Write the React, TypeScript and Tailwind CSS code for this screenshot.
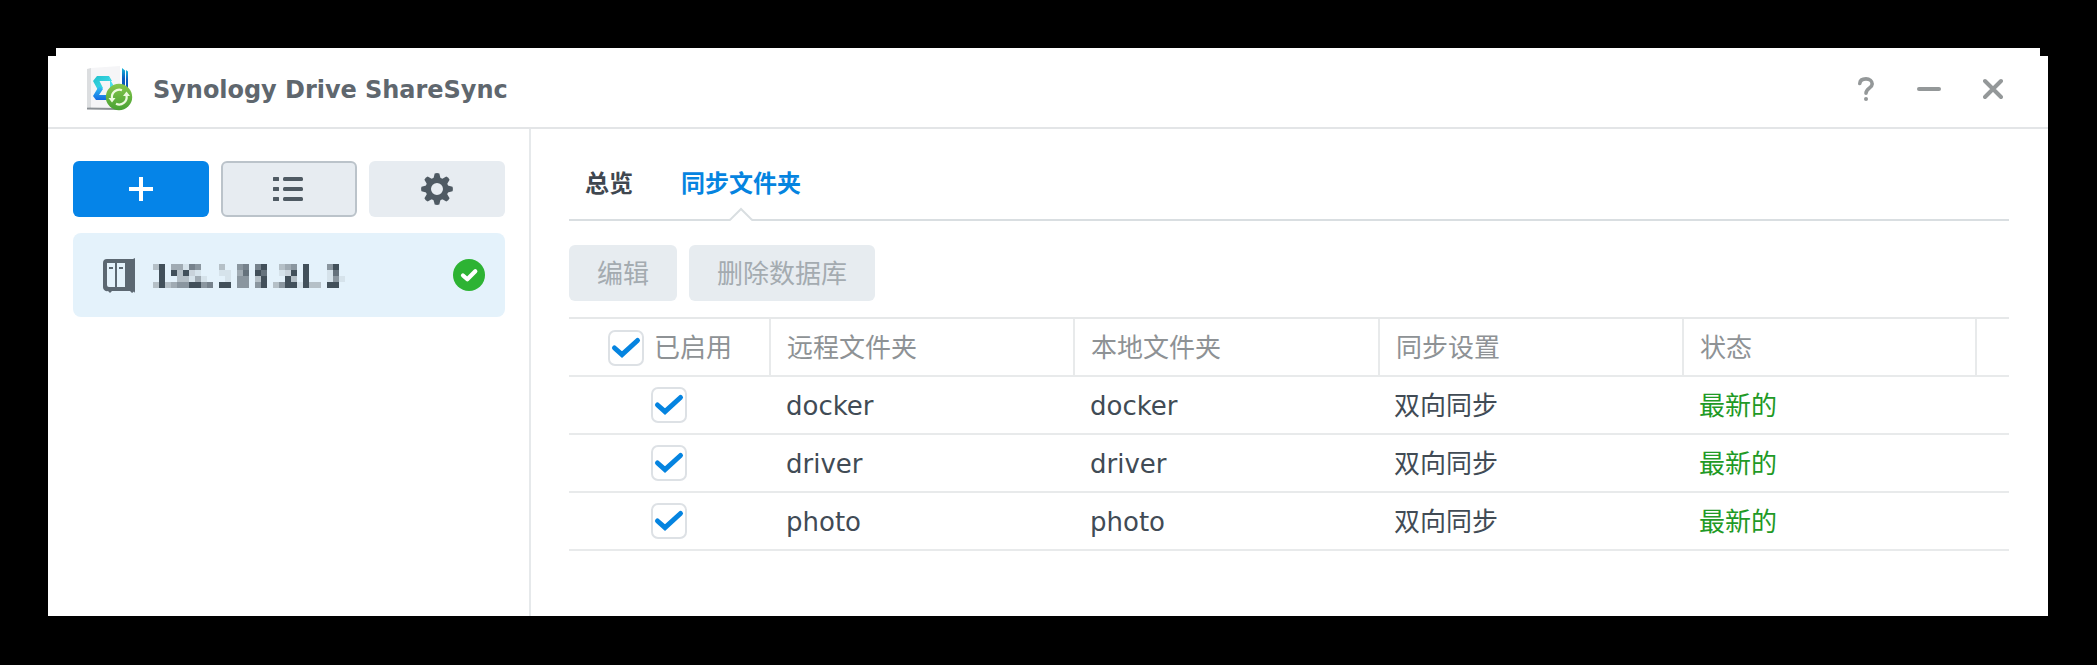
import React from "react";

const SHADES = [
  "",
  "#d6e3eb",
  "#c9d3db",
  "#b5c0c7",
  "#a0abb3",
  "#8a969f",
  "#76828c",
  "#65727c",
  "#505d67",
  "#42505a",
];

const MOSAIC = [
  "39044165000300560690034509000590",
  "09093921000110470970012909000170",
  "09003314100010550390009309000151",
  "39345599560990550590359919330990",
];

const ROWS = ["docker", "driver", "photo"];

function AppIcon() {
  return (
    <svg width="48" height="48" viewBox="0 0 48 48" className="shrink-0">
      <defs>
        <linearGradient id="teal" x1="0" y1="0" x2="1" y2="1">
          <stop offset="0" stopColor="#22c0cb" />
          <stop offset="1" stopColor="#45e3f2" />
        </linearGradient>
        <linearGradient id="blue" x1="0" y1="0" x2="0" y2="1">
          <stop offset="0" stopColor="#35c6f4" />
          <stop offset="1" stopColor="#1269e2" />
        </linearGradient>
        <linearGradient id="green" x1="0" y1="0" x2="0" y2="1">
          <stop offset="0" stopColor="#86c64c" />
          <stop offset="1" stopColor="#48a233" />
        </linearGradient>
        <linearGradient id="spine" x1="0" y1="0" x2="0" y2="1">
          <stop offset="0" stopColor="#18b8d8" />
          <stop offset="0.35" stopColor="#0a5fc0" />
          <stop offset="1" stopColor="#0b48a8" />
        </linearGradient>
      </defs>
      <path d="M2 4 L6 3 V43 L2 42Z" fill="#dcdee0" />
      <path d="M6 3 L35 1 V43 L6 42Z" fill="#f5f5f7" />
      <path d="M2 42.500 L35 43 V45 L2 44.500Z" fill="#8b9095" />
      <path d="M37 3 L40 5.500 V32 H37Z" fill="url(#spine)" />
      <path d="M41 5 L43 6.500 V32 H41Z" fill="url(#spine)" />
      <path d="M8 16 L12 11 H24 L27 16 H14.500 L18 23 L14 27Z" fill="url(#teal)" />
      <path d="M23 11 L30 23 L25 30 V16Z" fill="#4ae0ee" />
      <path d="M14 21 L18 24 L14 30 H23 V35 H11 L8 31Z" fill="url(#blue)" />
      <circle cx="34" cy="32" r="13.2" fill="url(#green)" />
      <g fill="none" stroke="#eefadf" strokeWidth="2.2">
        <path d="M27 33.500 A7.500 7.500 0 0 1 37 25.200" />
        <path d="M41.500 30.500 A7.500 7.500 0 0 1 31 38.800" />
      </g>
      <path d="M23.500 33 H30.500 L27 37.500Z M45 31 H38 L41.500 26.500Z" fill="#eefadf" />
    </svg>
  );
}

function NasIcon() {
  return (
    <svg width="34" height="36" viewBox="0 0 34 36" className="mt-[2px] shrink-0">
      <path d="M4 1 H30 L32 0 V35 L31 33.500 L29 35 L27 33 H9 L7 35 L5 33 A4 4 0 0 1 0 29 V5 A4 4 0 0 1 4 1Z" fill="#5c6872" />
      <path d="M4 5 H12 V29 H6 Q4 29 4 27Z M14 5 H22 V29 H14Z" fill="#e4f2fb" />
      <path d="M6 9 H10 V11 H6Z M16 9 H20 V11 H16Z" fill="#5c6872" />
    </svg>
  );
}

function GearIcon() {
  return (
    <svg width="32" height="32" viewBox="-16 -16 32 32" fill="#4f5a63">
      {[0, 45, 90, 135, 180, 225, 270, 315].map((angle) => (
        <path key={angle} transform={`rotate(${angle})`} d="M-4 -9 L-2.300 -15.500 Q0 -16.300 2.300 -15.500 L4 -9Z" />
      ))}
      <path fillRule="evenodd" d="M0 -11.500 A11.500 11.500 0 1 1 0 11.500 A11.500 11.500 0 1 1 0 -11.500Z M0 -6 A6 6 0 1 0 0 6 A6 6 0 1 0 0 -6Z" />
    </svg>
  );
}

function ListIcon() {
  return (
    <svg width="30" height="24" viewBox="0 0 30 24" fill="#4f5a63" className="mr-[2px]">
      {[0, 10, 20].map((y) => (
        <g key={y}>
          <rect x="0" y={y} width="6" height="4" rx="0.5" />
          <rect x="10" y={y} width="20" height="4" rx="1.5" />
        </g>
      ))}
    </svg>
  );
}

function MaskedAddress() {
  return (
    <svg width="192" height="24" viewBox="0 0 192 24" shapeRendering="crispEdges" className="mt-[2px] ml-[16px]">
      {MOSAIC.map((row, y) =>
        row.split("").map((level, x) =>
          level === "0" ? null : <rect key={`${x}-${y}`} x={x * 6} y={y * 6} width="6" height="6" fill={SHADES[Number(level)]} />,
        ),
      )}
    </svg>
  );
}

function Check() {
  return (
    <span className="flex h-9 w-9 shrink-0 items-center justify-center rounded-[7px] border-2 border-[#dde1e5] bg-white">
      <svg width="32" height="32" viewBox="0 0 32 32" className="shrink-0" fill="none" stroke="#0584e0" strokeWidth="5" strokeLinecap="round">
        <path d="M4.500 16 L12 22.700 L27.500 8.500" />
      </svg>
    </span>
  );
}

function Header({ label }: { label: string }) {
  return <div className="border-r-2 border-[#e8eaeb] pl-4">{label}</div>;
}

export default function App() {
  return (
    <div className="h-[665px] w-[2097px] bg-black pt-12 pr-[49px] pl-12 font-['DejaVu_Sans','Noto_Sans_CJK_SC',sans-serif] text-[26px] leading-[36px] text-[#414b55]">
      <div className="mx-2 h-2 bg-white" />
      <div className="flex h-[560px] flex-col bg-white">
        <header className="flex h-[73px] shrink-0 items-center border-b-2 border-[#e3e5e7] pb-[5px] pl-[37px]">
          <AppIcon />
          <h1 className="mt-px ml-5 text-[24px] font-bold tracking-[-0.04px] text-[#5f676e]">Synology Drive ShareSync</h1>
          <div className="mr-[45px] ml-auto flex gap-[42px] text-[#949899]">
            <svg width="18" height="24" viewBox="0 0 18 24" fill="none" stroke="currentColor" strokeWidth="3.6" strokeLinecap="round">
              <path d="M2.800 6.500 C3 3.600 5.500 1.900 9 1.900 C12.600 1.900 15.200 4 15.200 7 C15.200 11 9 11.500 9 16.300" />
              <circle cx="9" cy="22" r="2" fill="currentColor" stroke="none" />
            </svg>
            <svg width="24" height="24" viewBox="0 0 24 24" fill="currentColor">
              <rect y="10" width="24" height="4" rx="2" />
            </svg>
            <svg width="20" height="24" viewBox="0 0 20 24" stroke="currentColor" strokeWidth="4" strokeLinecap="round">
              <path d="M2 4 L18 20 M18 4 L2 20" />
            </svg>
          </div>
        </header>

        <div className="flex min-h-0 flex-1">
          <aside className="w-[483px] shrink-0 border-r-2 border-[#e6e9eb] pt-8 pr-6 pl-[25px]">
            <div className="grid grid-cols-3 gap-3">
              <button className="flex h-14 items-center justify-center rounded-md bg-[#0584e8]">
                <svg width="24" height="24" viewBox="0 0 24 24" fill="#fff">
                  <path d="M10 0 H14 V10 H24 V14 H14 V24 H10 V14 H0 V10 H10Z" />
                </svg>
              </button>
              <button className="flex h-14 items-center justify-center rounded-md border-2 border-[#bbc3ca] bg-[#e7ecf1]">
                <ListIcon />
              </button>
              <button className="flex h-14 items-center justify-center rounded-md bg-[#e7ecf1]">
                <GearIcon />
              </button>
            </div>
            <div className="mt-4 flex h-[84px] items-center rounded-lg bg-[#e4f2fb] pr-5 pl-[30px]">
              <NasIcon />
              <MaskedAddress />
              <svg width="32" height="32" viewBox="0 0 32 32" className="ml-auto">
                <circle cx="16" cy="16" r="16" fill="#2db333" />
                <path d="M10 16.500 L14.300 20.300 L22.300 12.200" fill="none" stroke="#fff" strokeWidth="4.200" strokeLinecap="round" strokeLinejoin="round" />
              </svg>
            </div>
          </aside>

          <main className="min-w-0 flex-1 pt-9 pr-[39px] pl-[38px]">
            <nav className="relative flex h-14 gap-12 border-b-2 border-[#d9dee1] pt-px pl-4 text-[24px] font-bold">
              <span className="text-[#3f4750]">总览</span>
              <span className="text-[#0584e0]">同步文件夹</span>
              <svg width="24" height="14" viewBox="0 0 24 14" className="absolute top-[42px] left-[160px]">
                <path d="M1 14 L12 2 L23 14Z" fill="#fff" />
                <path d="M0 13 L1.500 12.500 L12 2 L22.500 12.500 L24 13" fill="none" stroke="#d9dee1" strokeWidth="2" />
              </svg>
            </nav>
            <div className="mt-6 flex gap-3 text-[#a4abb0]">
              <button className="h-14 w-[108px] rounded-md bg-[#e7ecf0] pt-[2px]">编辑</button>
              <button className="h-14 w-[186px] rounded-md bg-[#e7ecf0] pt-[2px]">删除数据库</button>
            </div>

            <div className="mt-4 border-t-2 border-[#e6e8e9]">
              <div className="grid h-[58px] grid-cols-[202px_304px_305px_304px_293px_32px] border-b-2 border-[#e8eaeb] leading-[58px] text-[#8e9295]">
                <div className="flex h-14 items-center border-r-2 border-[#e8eaeb] pt-[2px] pl-[39px]">
                  <Check />
                  <span className="ml-[10px]">已启用</span>
                </div>
                <Header label="远程文件夹" />
                <Header label="本地文件夹" />
                <Header label="同步设置" />
                <Header label="状态" />
              </div>
              {ROWS.map((name) => (
                <div key={name} className="grid h-[58px] grid-cols-[202px_304px_305px_304px_293px_32px] border-b-2 border-[#e8eaeb] leading-[58px]">
                  <div className="flex h-14 items-center pl-[82px]">
                    <Check />
                  </div>
                  <div className="pl-[15px]">{name}</div>
                  <div className="pl-[15px]">{name}</div>
                  <div className="pl-[14px]">双向同步</div>
                  <div className="pl-[15px] text-[#1f9a26]">最新的</div>
                </div>
              ))}
            </div>
          </main>
        </div>
      </div>
    </div>
  );
}
